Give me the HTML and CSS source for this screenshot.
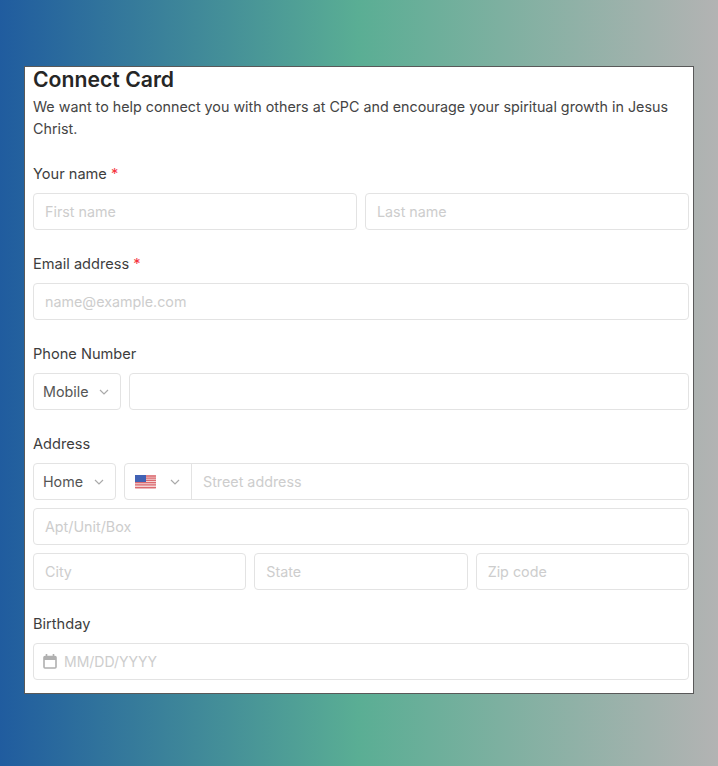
FILE: index.html
```html
<!DOCTYPE html>
<html lang="en">
<head>
    <meta charset="UTF-8">
    <meta name="viewport" content="width=device-width, initial-scale=1.0">
    <title>Connect Card</title>
    <link rel="stylesheet" href="styles.css">
</head>
<body>
    <div class="card">
        <h1>Connect Card</h1>
        <p class="intro">We want to help connect you with others at CPC and encourage your spiritual growth in Jesus Christ.</p>

        <div class="field">
            <div class="label">Your name <span class="req">*</span></div>
            <div class="row">
                <div class="box grow"><span class="ph">First name</span></div>
                <div class="box grow"><span class="ph">Last name</span></div>
            </div>
        </div>

        <div class="field">
            <div class="label">Email address <span class="req">*</span></div>
            <div class="box"><span class="ph">name@example.com</span></div>
        </div>

        <div class="field">
            <div class="label">Phone Number</div>
            <div class="row">
                <div class="box select mobile">
                    <span>Mobile</span>
                    <svg class="chev" width="10" height="6" viewBox="0 0 10 6"><path d="M1 1l4 4 4-4" fill="none" stroke="#aaa" stroke-width="1.2"/></svg>
                </div>
                <div class="box grow"></div>
            </div>
        </div>

        <div class="field">
            <div class="label">Address</div>
            <div class="stack">
                <div class="row">
                    <div class="box select home">
                        <span>Home</span>
                        <svg class="chev" width="10" height="6" viewBox="0 0 10 6"><path d="M1 1l4 4 4-4" fill="none" stroke="#aaa" stroke-width="1.2"/></svg>
                    </div>
                    <div class="box street grow">
                        <div class="country">
                            <svg class="flag" width="21" height="14" viewBox="0 0 21 14">
                                <rect width="21" height="14" rx="1.5" fill="#f3d3d3"/>
                                <path d="M0 1h21M0 3.2h21M0 5.4h21M0 7.6h21M0 9.8h21M0 12.6h21" stroke="#dc6a70" stroke-width="1.3"/>
                                <rect width="11" height="7" fill="#4262b4"/>
                            </svg>
                            <svg class="chev" width="10" height="6" viewBox="0 0 10 6"><path d="M1 1l4 4 4-4" fill="none" stroke="#aaa" stroke-width="1.2"/></svg>
                        </div>
                        <span class="ph">Street address</span>
                    </div>
                </div>
                <div class="box"><span class="ph">Apt/Unit/Box</span></div>
                <div class="row">
                    <div class="box grow"><span class="ph">City</span></div>
                    <div class="box grow"><span class="ph">State</span></div>
                    <div class="box grow"><span class="ph">Zip code</span></div>
                </div>
            </div>
        </div>

        <div class="field">
            <div class="label">Birthday</div>
            <div class="box date">
                <svg width="14" height="15" viewBox="0 0 14 15"><path d="M3.5 0v3M10.5 0v3" stroke="#b0b0b0" stroke-width="1.6"/><rect x="1" y="2.5" width="12" height="11.5" rx="1" fill="none" stroke="#b0b0b0" stroke-width="1.6"/><rect x="1" y="2.5" width="12" height="3.5" fill="#b0b0b0"/></svg>
                <span class="ph">MM/DD/YYYY</span>
            </div>
        </div>
    </div>
</body>
</html>
```

FILE: styles.css
```css
html, body {
    height: 100%;
}
body {
    margin: 0;
    padding: 66px 24px 0;
    box-sizing: border-box;
    background: linear-gradient(to right, #205c9f 0%, #5aae94 50%, #b3b3b3 100%);
    font-family: Inter, "Liberation Sans", sans-serif;
    font-size: 14.3px;
    color: #3d3d3d;
}
.card {
    width: 670px;
    height: 628px;
    box-sizing: border-box;
    background-color: #fff;
    border: 1px solid rgba(0, 0, 0, 0.65);
    padding: 0 4px 0 8px;
}
h1 {
    margin: 0 0 4px;
    font-size: 21.2px;
    line-height: 25px;
    font-weight: 600;
    color: #262626;
}
.intro {
    margin: 0;
    line-height: 22px;
    color: #444;
}
.field {
    margin-top: 23px;
}
.label {
    font-size: 14.6px;
    line-height: 22px;
    margin-bottom: 8px;
}
.req {
    color: #f5333d;
}
.row {
    display: flex;
    gap: 8px;
}
.stack {
    display: flex;
    flex-direction: column;
    gap: 8px;
}
.box {
    display: flex;
    align-items: center;
    height: 37px;
    box-sizing: border-box;
    padding: 0 11px;
    border: 1px solid #e3e3e3;
    border-radius: 4px;
    background-color: #fff;
}
.grow {
    flex: 1;
    min-width: 0;
}
.ph {
    color: #cdcdcd;
}
.select {
    justify-content: space-between;
    padding: 0 11px 0 9px;
    color: #555;
}
.mobile {
    width: 88px;
}
.home {
    width: 83px;
}
.street {
    padding: 0 11px 0 0;
}
.country {
    display: flex;
    align-items: center;
    justify-content: space-between;
    width: 67px;
    height: 100%;
    box-sizing: border-box;
    padding: 0 11px 0 10px;
    margin-right: 11px;
    border-right: 1px solid #e3e3e3;
}
.flag {
    display: block;
}
.date {
    gap: 7px;
    padding: 0 9px;
    font-size: 14px;
}
```
